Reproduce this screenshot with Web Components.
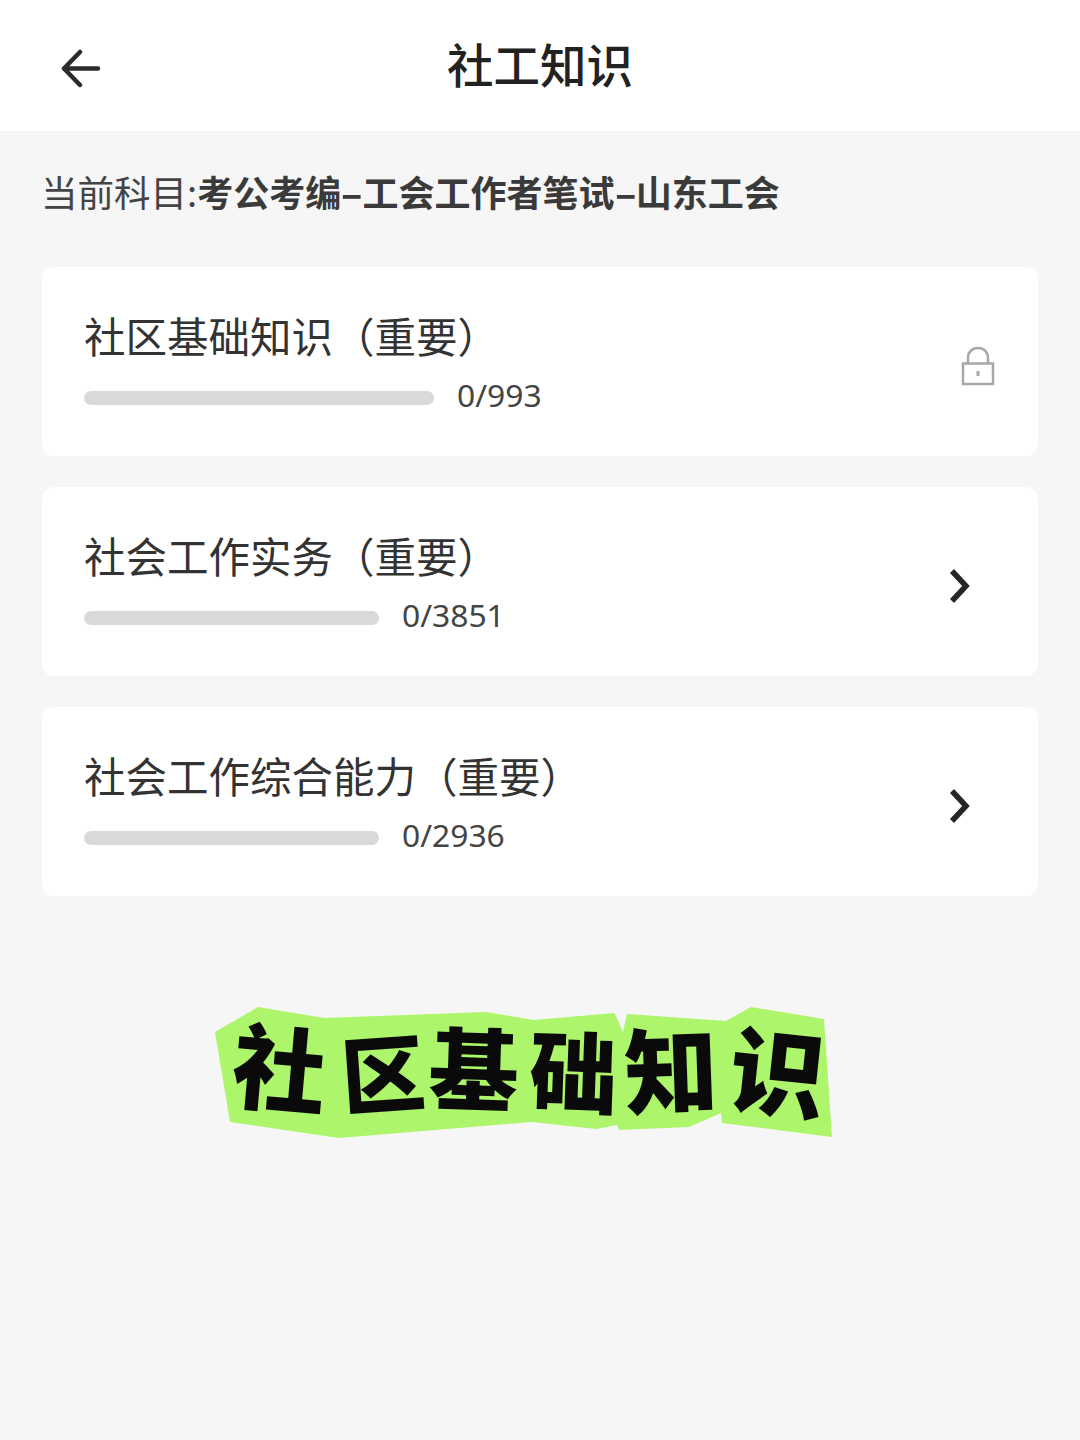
<!DOCTYPE html>
<html lang="zh">
<head>
<meta charset="utf-8">
<title>社工知识</title>
<style>
    html, body { margin: 0; padding: 0; }
    body {
        width: 1080px;
        height: 1440px;
        overflow: hidden;
        background: #f6f6f6;
        color: #333;
        font-family: "Noto Sans CJK SC", "Noto Sans", sans-serif;
    }
    .dash {
        display: inline-block;
        margin: 0 4px;
        transform: scaleX(1.8);
    }
</style>
</head>
<body>
<app-header>社工知识</app-header>
<subject-line label="当前科目:">考公考编<span class="dash">-</span>工会工作者笔试<span class="dash">-</span>山东工会</subject-line>
<course-list>
    <course-card count="0/993" bar="350" locked>社区基础知识（重要）</course-card>
    <course-card count="0/3851" bar="295">社会工作实务（重要）</course-card>
    <course-card count="0/2936" bar="295">社会工作综合能力（重要）</course-card>
</course-list>
<cut-sticker text="社区基础知识"></cut-sticker>

<script>
class AppHeader extends HTMLElement {
    constructor() {
        super();
        this.attachShadow({ mode: 'open' });
        this.shadowRoot.innerHTML = `
        <style>
            :host {
                display: grid;
                grid-template-columns: 1fr auto 1fr;
                align-items: center;
                height: 131px;
                background: #fff;
                color: #222;
            }
            .back { display: flex; padding: 6px 0 0 60px; }
            .title {
                font-size: 46.5px;
                font-weight: 500;
                line-height: 125px;
                padding-bottom: 6px;
            }
        </style>
        <div class="back">
            <svg width="42" height="40" viewBox="0 0 42 40" fill="none" stroke="#2b2b2b" stroke-width="4.5" stroke-linecap="round" stroke-linejoin="round">
                <path d="M20 3 L4 19.5 L20 36 M4 19.5 H38"/>
            </svg>
        </div>
        <div class="title"><slot></slot></div>
        <div></div>
        `;
    }
}

class SubjectLine extends HTMLElement {
    constructor() {
        super();
        this.attachShadow({ mode: 'open' });
        this.shadowRoot.innerHTML = `
        <style>
            :host {
                display: block;
                padding: 33px 0 48px 43px;
                font-size: 36px;
                line-height: 54px;
                color: #444;
            }
            .label { font-size: 36.5px; margin-left: -2px; }
            b { font-weight: 700; color: #3a3a3a; }
        </style>
        <span class="label"></span><b><slot></slot></b>
        `;
    }
    connectedCallback() {
        this.shadowRoot.querySelector('.label').textContent = this.getAttribute('label');
    }
}

class CourseList extends HTMLElement {
    constructor() {
        super();
        this.attachShadow({ mode: 'open' });
        this.shadowRoot.innerHTML = `
        <style>
            :host {
                display: flex;
                flex-direction: column;
                gap: 31px;
                margin: 0 42px;
            }
        </style>
        <slot></slot>
        `;
    }
}

class CourseCard extends HTMLElement {
    constructor() {
        super();
        this.attachShadow({ mode: 'open' });
        this.shadowRoot.innerHTML = `
        <style>
            :host {
                display: flex;
                align-items: center;
                justify-content: space-between;
                box-sizing: border-box;
                height: 189px;
                padding: 0 42px;
                background: #fff;
                border-radius: 12px;
            }
            .text { padding-bottom: 2px; }
            .title {
                font-size: 41.5px;
                line-height: 60px;
                color: #333;
            }
            .progress {
                display: flex;
                align-items: center;
                gap: 23px;
                margin-top: 14px;
            }
            .bar {
                height: 14px;
                border-radius: 7px;
                background: #d9d9d9;
            }
            .count {
                font-family: "Noto Sans", sans-serif;
                font-size: 31.8px;
                line-height: 44px;
                margin-top: -6px;
                color: #444;
            }
            .icon { display: flex; }
            .lock { margin: 8px 1px 0 0; }
            .chevron { margin: 8px 24px 0 0; }
        </style>
        <div class="text">
            <div class="title"><slot></slot></div>
            <div class="progress">
                <div class="bar"></div>
                <div class="count"></div>
            </div>
        </div>
        <div class="icon"></div>
        `;
    }
    connectedCallback() {
        this.shadowRoot.querySelector('.bar').style.width = this.getAttribute('bar') + 'px';
        this.shadowRoot.querySelector('.count').textContent = this.getAttribute('count');
        const icon = this.shadowRoot.querySelector('.icon');
        if (this.hasAttribute('locked')) {
            icon.classList.add('lock');
            icon.innerHTML = `
            <svg width="34" height="40" viewBox="0 0 34 40" fill="none" stroke="#a8a8a8" stroke-width="2.5">
                <rect x="2" y="17.5" width="30" height="20.5"/>
                <path d="M7 17 V12 C7 6 11 2 17 2 C23 2 27 6 27 12 V17"/>
                <path d="M17 25 V30" stroke-width="3"/>
            </svg>`;
        } else {
            icon.classList.add('chevron');
            icon.innerHTML = `
            <svg width="24" height="36" viewBox="0 0 24 36" fill="none" stroke="#262626" stroke-width="5.5">
                <path d="M4 3 L18 18 L4 33"/>
            </svg>`;
        }
    }
}

// 每个字的位置和角度是照着贴纸量的
const STICKER_CHARS = [
    { w: 110, r: 5, dx: -7, dy: -9, s: 1.06 },
    { w: 85, r: -4, dx: -3, dy: -3, s: 0.95 },
    { w: 100, r: 2, dx: -3, dy: -8, s: 1.02 },
    { w: 95, r: 2, dx: -1, dy: -5, s: 1 },
    { w: 104, r: -2, dx: -3, dy: -7, s: 1.06 },
    { w: 102, r: 6, dx: 1, dy: -5, s: 1.08 }
];

class CutSticker extends HTMLElement {
    constructor() {
        super();
        this.attachShadow({ mode: 'open' });
        this.shadowRoot.innerHTML = `
        <style>
            :host {
                display: block;
                box-sizing: border-box;
                width: 617px;
                height: 131px;
                margin: 111px 0 0 215px;
                background: #adf56a;
                clip-path: polygon(43px 0, 109px 11px, 271px 5px, 319px 13px, 399.5px 6px, 408px 25px, 412px 7px, 511px 14px, 536px 0, 609px 12px, 617px 130px, 507px 116px, 506px 106px, 474px 120px, 404px 123px, 402px 118px, 381px 122px, 317px 115px, 124px 131px, 15px 115px, 0 25px);
            }
            .chars {
                display: flex;
                align-items: center;
                height: 100%;
                padding-left: 17px;
                font-size: 88px;
                font-weight: 900;
                line-height: 1;
                color: #0a0a0a;
            }
            span { display: block; text-align: center; }
        </style>
        <div class="chars"></div>
        `;
    }
    connectedCallback() {
        const box = this.shadowRoot.querySelector('.chars');
        [...this.getAttribute('text')].forEach((ch, i) => {
            const c = STICKER_CHARS[i];
            const span = document.createElement('span');
            span.textContent = ch;
            span.style.width = c.w + 'px';
            span.style.transform = `translate(${c.dx}px, ${c.dy}px) rotate(${c.r}deg) scale(${c.s})`;
            box.appendChild(span);
        });
    }
}

customElements.define('app-header', AppHeader);
customElements.define('subject-line', SubjectLine);
customElements.define('course-list', CourseList);
customElements.define('course-card', CourseCard);
customElements.define('cut-sticker', CutSticker);
</script>
</body>
</html>
